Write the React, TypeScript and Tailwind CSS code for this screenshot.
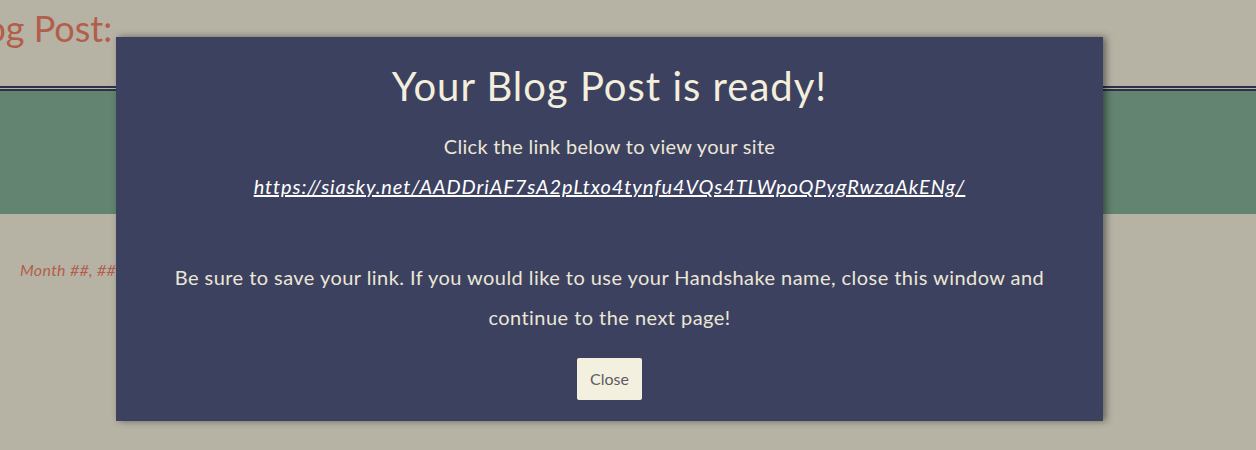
import React from 'react';

const SITE_URL = 'https://siasky.net/AADDriAF7sA2pLtxo4tynfu4VQs4TLWpoQPygRwzaAkENg/';

const App: React.FC = () => {
  return (
    <div className="relative min-h-[450px] w-full overflow-hidden bg-[#b6b3a5] font-['Lato',sans-serif]">
      {/* Header */}
      <div className="h-[86px] pt-[4px]">
        <h1 className="ml-[-46px] text-[36px] leading-[48px] text-[#b35e4a]">Blog Post:</h1>
      </div>
      <div className="h-[2px] bg-[#2e3049]" />
      <div className="h-[1px]" />
      <div className="h-[2px] bg-[#2e3049]" />

      {/* Banner */}
      <div className="h-[123px] bg-[#628470]" />

      {/* Post meta */}
      <div className="px-[20px] pt-[44px]">
        <p className="text-[16px] italic tracking-[0.3px] text-[#b35e4a]">Month ##, ####</p>
      </div>

      {/* Modal */}
      <div className="absolute left-[116px] top-[37px] flex w-[987px] flex-col items-center bg-[#3d4160] px-[30px] pb-[21px] pt-[25px] text-center shadow-[3px_0_7px_rgba(0,0,0,0.45)]">
        <h2 className="text-[40px] leading-[48px] tracking-[1px] text-[#f3efdc]">Your Blog Post is ready!</h2>
        <p className="mt-[16px] text-[20px] leading-[40px] tracking-[0.3px] text-[#ebe7d6]">
          Click the link below to view your site
        </p>
        <a href="#" className="text-[20px] italic leading-[40px] tracking-[0.9px] text-white underline">
          {SITE_URL}
        </a>
        <p className="mt-[51px] text-[20px] leading-[40px] tracking-[0.45px] text-[#ebe7d6]">
          Be sure to save your link. If you would like to use your Handshake name, close this window and
          <br />
          continue to the next page!
        </p>
        <button className="mt-[21px] h-[42px] w-[65px] rounded-[2px] bg-[#f3f0df] text-[16px] text-[#5b5b66]">
          Close
        </button>
      </div>
    </div>
  );
};

export default App;
